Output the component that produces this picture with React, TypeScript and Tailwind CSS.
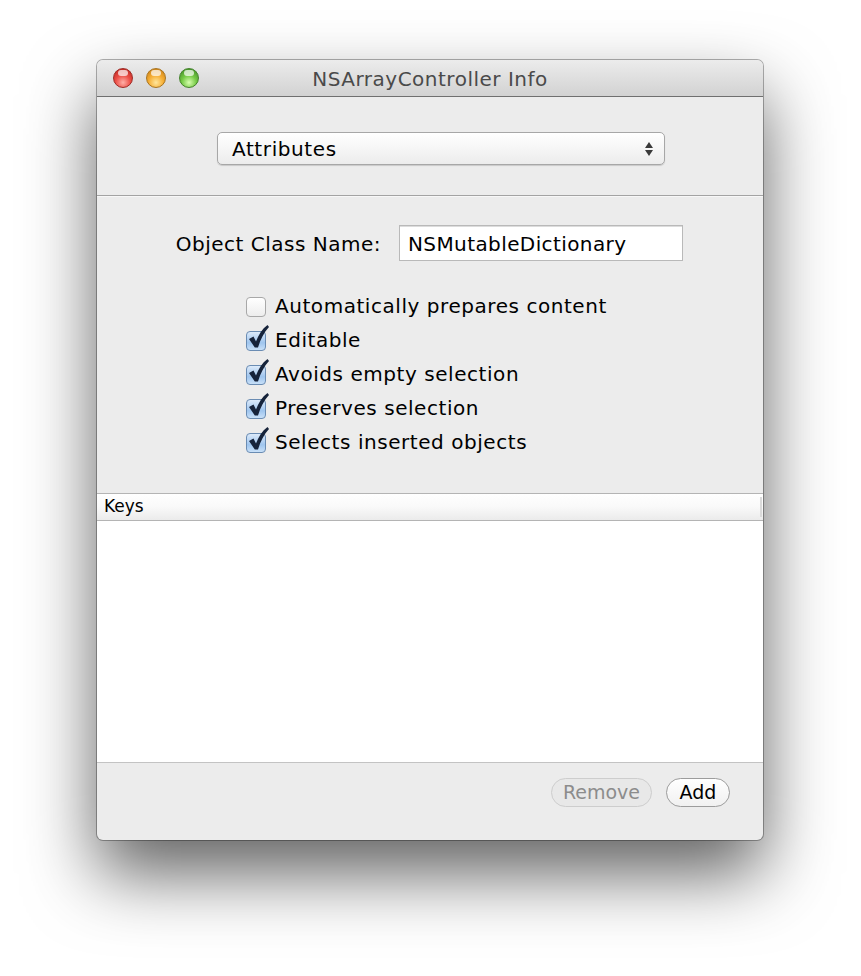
import React from "react";

const font = { fontFamily: '"DejaVu Sans", "Liberation Sans", sans-serif' };

function Light({ tone }: { tone: "red" | "amber" | "green" }) {
  const cls =
    tone === "red"
      ? "bg-[radial-gradient(circle_at_50%_75%,#ffb0a8_0%,#ec4f47_45%,#c22a24_85%)] border-[#9e2b26]"
      : tone === "amber"
      ? "bg-[radial-gradient(circle_at_50%_75%,#ffe69c_0%,#f6ae34_45%,#cf851a_85%)] border-[#a87420]"
      : "bg-[radial-gradient(circle_at_50%_75%,#d8ffb0_0%,#74c944_45%,#47952a_85%)] border-[#44832c]";
  return (
    <div className={`relative w-[20px] h-[20px] rounded-full border ${cls}`}>
      <div className="absolute left-[4px] top-[1px] w-[10px] h-[6px] rounded-full bg-white/70" />
    </div>
  );
}

function Check({ on }: { on: boolean }) {
  return (
    <div className="relative w-[22px] h-[22px] shrink-0">
      <div
        className={`absolute left-0 top-[2px] w-[20px] h-[20px] rounded-[4px] border ${
          on
            ? "border-[#6a8cb3] bg-[linear-gradient(#dceafa,#9fc5ee_60%,#c8e0f8)]"
            : "border-[#a8a8a8] bg-[linear-gradient(#ffffff,#ededed)]"
        }`}
      />
      {on && (
        <svg className="absolute left-[1px] top-[-5px]" width="24" height="26" viewBox="0 0 24 26">
          <path
            d="M2 15 L6.5 12.5 L9 17.5 C11.5 11 15 5 20.5 1 L22 3 C17 8.5 13.5 15 11 23.5 L7.8 23.5 Z"
            fill="#16233a"
          />
        </svg>
      )}
    </div>
  );
}

export default function App() {
  const options = [
    { label: "Automatically prepares content", on: false },
    { label: "Editable", on: true },
    { label: "Avoids empty selection", on: true },
    { label: "Preserves selection", on: true },
    { label: "Selects inserted objects", on: true },
  ];

  return (
    <div className="w-[861px] h-[976px] bg-white pt-[60px] pl-[97px]" style={font}>
      <div className="w-[666px] h-[780px] rounded-[6px] bg-[#ececec] flex flex-col overflow-hidden shadow-[0_34px_70px_rgba(0,0,0,0.62),0_0_0_1px_rgba(0,0,0,0.3)]">
        {/* title bar */}
        <div className="relative h-[37px] shrink-0 flex items-center bg-[linear-gradient(#ececec,#d2d2d2)] border-b border-[#6f6f6f]">
          <div className="flex items-center gap-[13px] pl-[16px]">
            <Light tone="red" />
            <Light tone="amber" />
            <Light tone="green" />
          </div>
          <div className="absolute inset-0 flex items-center justify-center pt-[1px] text-[20px] tracking-[0.5px] text-[#4a4a4a]">
            NSArrayController Info
          </div>
        </div>

        {/* popup section */}
        <div className="h-[99px] shrink-0 pt-[35px] pl-[120px] border-b border-[#a3a3a3]">
          <div className="w-[448px] h-[33px] rounded-[5px] border border-[#a7a7a7] bg-[linear-gradient(#ffffff,#f6f6f6_50%,#ececec)] shadow-[0_1px_1px_rgba(0,0,0,0.15)] flex items-center justify-between pl-[14px] pr-[10px]">
            <span className="text-[20px] tracking-[0.6px] text-black">Attributes</span>
            <svg width="10" height="16" viewBox="0 0 10 16">
              <path d="M5 1 L9 7 L1 7 Z" fill="#3a3a3a" />
              <path d="M1 9 L9 9 L5 15 Z" fill="#3a3a3a" />
            </svg>
          </div>
        </div>

        {/* attributes */}
        <div className="h-[297px] shrink-0 border-t border-[#f7f7f7] pt-[28px]">
          <div className="flex items-center">
            <div className="w-[284px] pt-[2px] text-right text-[20px] tracking-[0.5px] text-black">Object Class Name:</div>
            <div className="ml-[18px] w-[284px] h-[36px] bg-white border border-[#b9b9b9] shadow-[inset_0_1px_0_#dcdcdc] flex items-center pl-[8px] pt-[2px] text-[20px] tracking-[0.4px] text-black">
              NSMutableDictionary
            </div>
          </div>
          <div className="mt-[28px] pl-[149px] flex flex-col">
            {options.map((o) => (
              <div key={o.label} className="h-[34px] flex items-center gap-[7px] text-[20px] tracking-[0.55px] text-black">
                <Check on={o.on} />
                <span>{o.label}</span>
              </div>
            ))}
          </div>
        </div>

        {/* table */}
        <div className="h-[28px] shrink-0 flex items-center border-y border-[#b4b4b4] bg-[linear-gradient(#ffffff,#f9f9f9_50%,#ebebeb)] pl-[7px]">
          <span className="flex-1 text-[17px] text-black">Keys</span>
          <div className="w-[2px] h-[20px] bg-[#dadada] mr-[1px]" />
        </div>
        <div className="flex-1 bg-white border-b border-[#c3c3c3]" />

        {/* bottom */}
        <div className="h-[77px] shrink-0 flex items-start justify-end gap-[14px] pt-[15px] pr-[33px]">
          <div className="w-[101px] h-[29px] rounded-full border border-[#cdcdcd] bg-[#e8e8e8] flex items-center justify-center text-[19px] text-[#8c8c8c]">
            Remove
          </div>
          <div className="w-[64px] h-[29px] rounded-full border border-[#9c9c9c] bg-[linear-gradient(#ffffff,#f1f1f1)] flex items-center justify-center text-[19px] text-black">
            Add
          </div>
        </div>
      </div>
    </div>
  );
}
